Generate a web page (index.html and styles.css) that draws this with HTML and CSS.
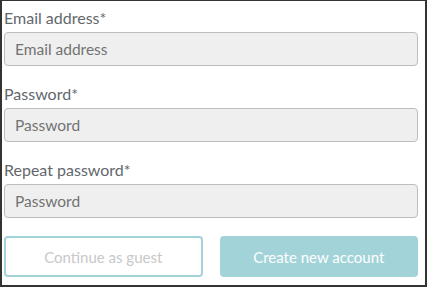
FILE: index.html
```html
<!DOCTYPE html>
<html lang="en">
  <head>
    <meta charset="UTF-8" />
    <meta name="viewport" content="width=device-width, initial-scale=1.0" />
    <title>Sign up</title>
    <link rel="stylesheet" href="styles.css">
  </head>
  <body>
    <form class="signup">
      <div class="form-group">
        <label for="email">Email address*</label>
        <input type="email" id="email" placeholder="Email address" />
      </div>

      <div class="form-group">
        <label for="password">Password*</label>
        <input type="password" id="password" placeholder="Password" />
      </div>

      <div class="form-group">
        <label for="repeat">Repeat password*</label>
        <input type="password" id="repeat" placeholder="Password" />
      </div>

      <div class="actions">
        <button type="button" class="btn-guest">Continue as guest</button>
        <button type="submit" class="btn-create">Create new account</button>
      </div>
    </form>
  </body>
</html>
```

FILE: styles.css
```css
html,
body {
  margin: 0;
  height: 100%;
}

body {
  font-family: Lato, "Noto Sans", sans-serif;
  box-sizing: border-box;
  border: 2px solid #333;
  border-top-width: 1px;
  background: #fff;
}

.signup {
  padding: 7px 7px 0 2px;
}

.form-group {
  display: flex;
  flex-direction: column;
  gap: 4px;
  margin-bottom: 18px;
}

label {
  font-size: 16px;
  line-height: 20px;
  color: #63676c;
}

input {
  box-sizing: border-box;
  height: 34px;
  padding: 0 10px;
  font-family: inherit;
  font-size: 15.5px;
  color: #555;
  background-color: #efefef;
  border: 1px solid #bdbdbd;
  border-radius: 4px;
}

input::placeholder {
  color: #727272;
}

.actions {
  display: grid;
  grid-template-columns: 1fr 1fr;
  gap: 17px;
}

button {
  box-sizing: border-box;
  height: 41px;
  font-family: inherit;
  font-size: 15px;
  border-radius: 4px;
  cursor: pointer;
}

.btn-guest {
  background-color: #fff;
  color: #c8c8c8;
  border: 2px solid #a2d3d9;
}

.btn-create {
  background-color: #a2d3d9;
  color: #fff;
  border: none;
}
```
